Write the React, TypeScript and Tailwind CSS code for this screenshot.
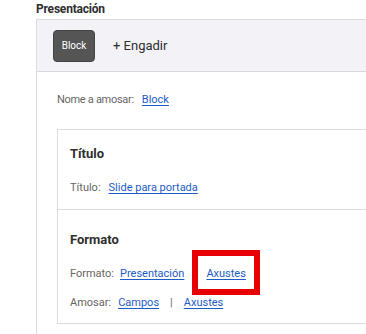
import React from "react";

const Link = ({ children }: { children: React.ReactNode }) => (
  <a href="#" className="text-[#1c5cc8] underline underline-offset-2">{children}</a>
);

export default function App() {
  return (
    <div className="w-[366px] h-[334px] overflow-hidden bg-white font-['Roboto',sans-serif] text-[#2e2e2e]">
      <div className="pl-[36px] h-[19px] leading-[19px] text-[12px] font-bold tracking-[-0.2px]">Presentación</div>
      <div className="ml-[36px] border-l border-t border-[#dcdce0] h-[400px]">
        <div className="h-[52px] bg-[#f2f2f7] border-b border-[#d8d8dc] flex items-center pl-[16px] gap-[18px]">
          <div className="w-[42px] h-[32px] rounded-[4px] bg-[#555555] border border-[#444] text-white text-[10px] flex items-center justify-center">Block</div>
          <div className="text-[13px] text-[#2e2e2e]">+ Engadir</div>
        </div>
        <div className="pl-[20px]">
          <div className="mt-[18px] h-[20px] flex items-center text-[11px]">
            <span className="text-[#666] tracking-[-0.3px]">Nome a amosar:</span>
            <span className="ml-[8px]"><Link>Block</Link></span>
          </div>
          <div className="mt-[19px] border-l border-t border-[#dcdce0]">
            <div className="pl-[12px] pt-[14px] pb-[11px] border-b border-[#dcdce0]">
              <div className="h-[20px] flex items-center text-[13px] font-bold">Título</div>
              <div className="mt-[14px] h-[20px] flex items-center text-[11px]">
                <span className="text-[#666]">Título:</span>
                <span className="ml-[8px]"><Link>Slide para portada</Link></span>
              </div>
            </div>
            <div className="pl-[12px] pt-[20px] pb-[10px] border-b border-[#dcdce0]">
              <div className="h-[20px] flex items-center text-[13px] font-bold">Formato</div>
              <div className="mt-[14px] h-[20px] flex items-center text-[11px]">
                <span className="text-[#666]">Formato:</span>
                <span className="ml-[6px]"><Link>Presentación</Link></span>
                <span className="ml-[22px] relative">
                  <Link>Axustes</Link>
                  <span className="absolute left-[-14px] right-[-14px] top-[-16px] bottom-[-13px] border-[6px] border-[#e60000] pointer-events-none" />
                </span>
              </div>
              <div className="mt-[9px] h-[20px] flex items-center text-[11px]">
                <span className="text-[#666]">Amosar:</span>
                <span className="ml-[7px]"><Link>Campos</Link></span>
                <span className="mx-[11px] text-[#666]">|</span>
                <Link>Axustes</Link>
              </div>
            </div>
          </div>
        </div>
      </div>
    </div>
  );
}
